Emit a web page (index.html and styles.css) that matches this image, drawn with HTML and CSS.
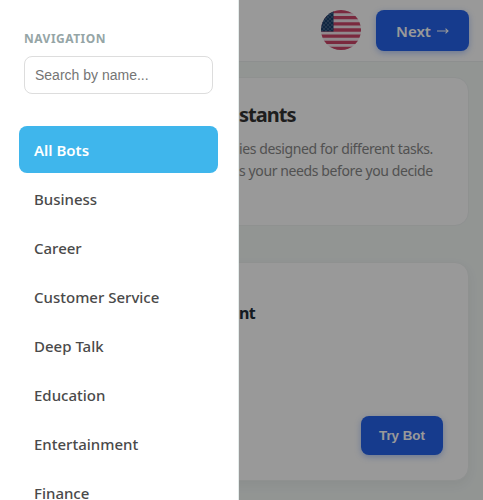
FILE: index.html
```html
<!DOCTYPE html>
<html lang="en">
<head>
<meta charset="utf-8">
<title>All Bots</title>
<link rel="stylesheet" href="styles.css">
</head>
<body>
<div class="page">
  <header class="topbar">
    <svg class="flag" viewBox="0 0 40 40" aria-label="English">
      <defs><clipPath id="round"><circle cx="20" cy="20" r="20"/></clipPath>
      <pattern id="stars" width="4" height="4" patternUnits="userSpaceOnUse"><circle cx="1" cy="1" r=".65" fill="#7f93ab"/><circle cx="3" cy="3" r=".65" fill="#7f93ab"/></pattern></defs>
      <g clip-path="url(#round)">
        <path fill="#f2e4ec" d="M0 0h40v40H0z"/>
        <path stroke="#cb4568" stroke-width="3.3" d="M0 1.54h40M0 7.69h40M0 13.85h40M0 20h40M0 26.15h40M0 32.3h40M0 38.46h40"/>
        <path fill="#19416f" d="M0 0h12.5v21.5H0z"/>
        <path fill="url(#stars)" d="M0 0h12.5v21.5H0z"/>
      </g>
    </svg>
    <button class="btn next">Next <svg class="arrow" viewBox="0 0 12 8"><path d="M0 4h11M8.5 1.7l2.5 2.3-2.5 2.3"/></svg></button>
  </header>
  <main class="content">
    <section class="card intro">
      <h1>stants</h1>
      <p class="line first">ies designed for different tasks.</p>
      <p class="line second">s your needs before you decide</p>
    </section>
    <section class="card bot">
      <h2>nt</h2>
      <button class="btn try">Try Bot</button>
    </section>
  </main>
</div>
<div class="overlay"></div>
<aside class="sidebar">
  <div class="heading">NAVIGATION</div>
  <input class="search" type="text" placeholder="Search by name...">
  <nav class="menu">
    <a class="item active">All Bots</a>
    <a class="item">Business</a>
    <a class="item">Career</a>
    <a class="item">Customer Service</a>
    <a class="item">Deep Talk</a>
    <a class="item">Education</a>
    <a class="item">Entertainment</a>
    <a class="item">Finance</a>
  </nav>
</aside>
</body>
</html>
```
FILE: styles.css
```css
* { box-sizing: border-box; }
body { margin: 0; height: 500px; overflow: hidden; font-family: "Noto Sans", "Open Sans", sans-serif; }
.page { height: 500px; overflow: hidden; background: #f3f8f6; }
.topbar { height: 62px; display: flex; justify-content: flex-end; align-items: center; gap: 15px; padding: 0 14px 1px 0; background: #fff; border-bottom: 1px solid #ecefef; }
.flag { width: 40px; height: 40px; }
.btn { display: flex; align-items: center; justify-content: center; border: 0; background: #2563eb; color: #fff; font-family: inherit; padding: 0; }
.next { width: 93px; height: 41px; border-radius: 8px; font-size: 15px; font-weight: 600; gap: 6px; padding-top: 2px; box-shadow: 0 2px 6px rgba(37, 99, 235, .35); }
.arrow { width: 12px; height: 8px; fill: none; stroke: #fff; stroke-width: 1.1; }
.content { padding: 15px 14px 0 0; }
.card { margin-left: 200px; background: #fff; border: 1px solid #eef2f1; border-radius: 14px; }
.intro { height: 149px; padding-left: 38px; }
h1 { margin: 23px 0 0; font-size: 20px; line-height: 28px; letter-spacing: -1px; white-space: nowrap; }
h1, h2 { color: #333; font-weight: 700; }
.line { margin: 0; font-size: 14px; line-height: 22px; color: #888; letter-spacing: -.39px; white-space: nowrap; }
.first { margin-top: 9px; }
.bot { height: 219px; margin-top: 36px; padding: 36px 25px 0 38px; display: flex; flex-direction: column; box-shadow: 0 4px 12px rgba(0, 0, 0, .05); }
h2 { margin: 0; font-size: 16px; line-height: 28px; letter-spacing: -.7px; color: #222d3a; }
.try { width: 82px; height: 39px; margin-top: 89px; align-self: flex-end; border-radius: 8px; font: 700 13.33px "Liberation Sans", sans-serif; box-shadow: 0 2px 6px rgba(37, 99, 235, .35); }
.overlay { position: absolute; inset: 0; background: rgba(0, 0, 0, .4); }
.sidebar { position: absolute; top: 0; left: 0; width: 239px; height: 500px; overflow: hidden; padding-top: 30px; background: #fff; border-right: 1px solid #e4ebea; }
.heading { margin-left: 24px; height: 18px; line-height: 18px; font-size: 12px; font-weight: 700; letter-spacing: .5px; color: #95a5a6; }
.search { display: block; margin: 8px 0 0 24px; width: 189px; height: 38px; padding: 0 10px; border: 1px solid #ddd; border-radius: 8px; font: 14px "Liberation Sans", sans-serif; }
.search::placeholder { color: #757575; }
.menu { display: flex; flex-direction: column; gap: 2px; margin: 32px 20px 0 19px; }
.item { flex: none; height: 47px; padding-left: 15px; line-height: 49px; border-radius: 8px; font-size: 15px; font-weight: 500; color: #4a4a4a; }
.active { background: #3fb6ec; color: #fff; font-weight: 600; }
```
